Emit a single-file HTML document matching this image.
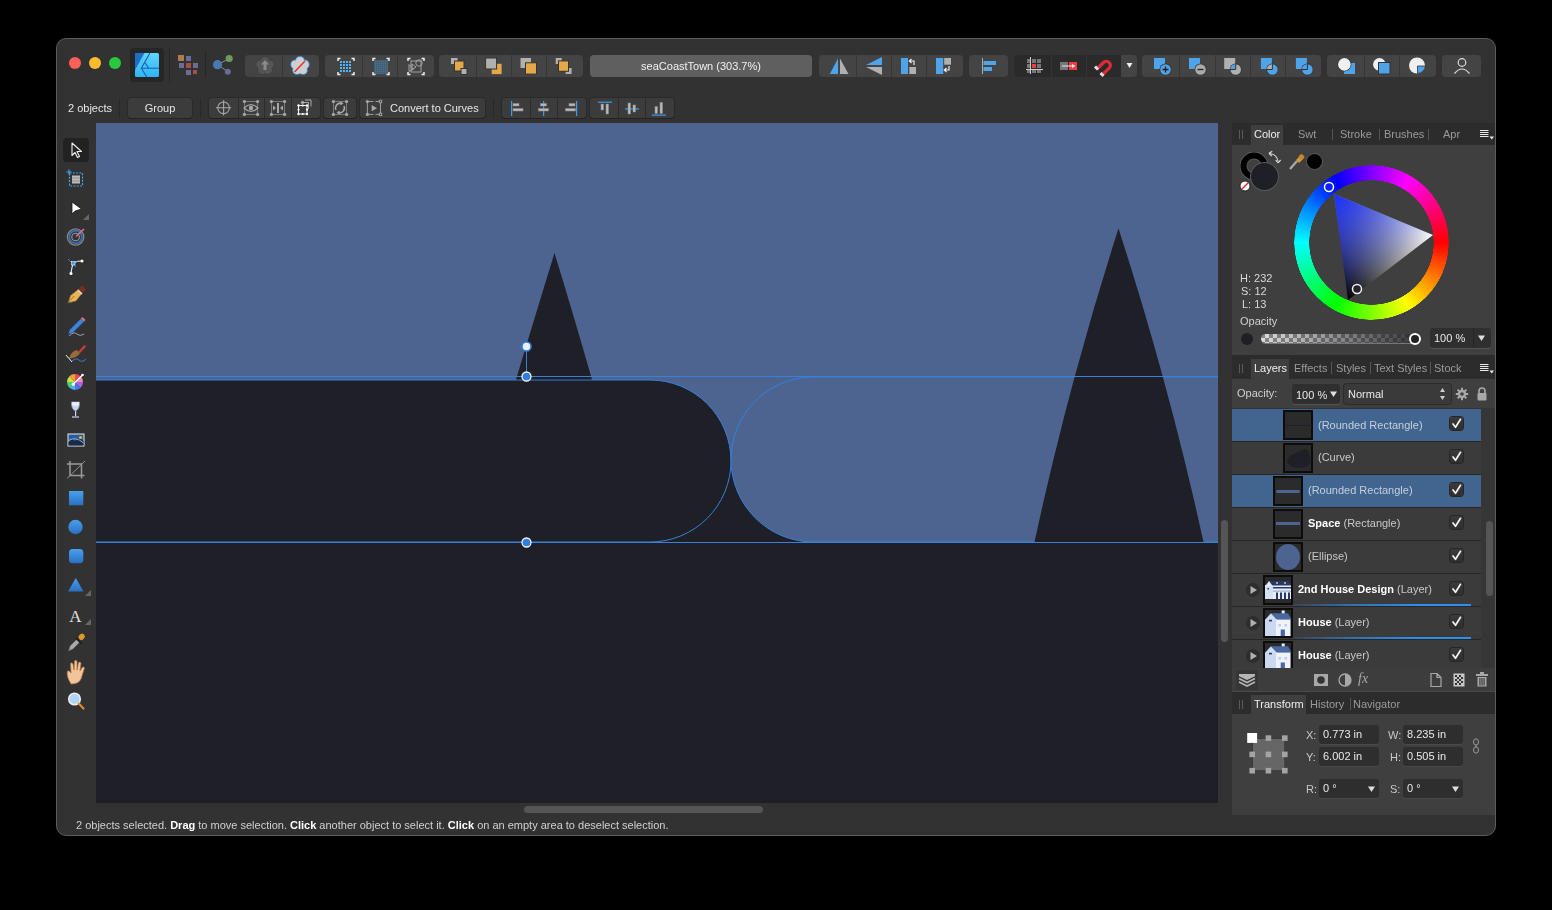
<!DOCTYPE html>
<html><head><meta charset="utf-8">
<style>
*{box-sizing:border-box;margin:0;padding:0}
html,body{width:1552px;height:910px;background:#000;overflow:hidden;font-family:"Liberation Sans",sans-serif;}
.a{position:absolute}
#win{position:absolute;left:56px;top:38px;width:1440px;height:798px;background:#323232;border-radius:10px;border:1px solid #5c5c5c;overflow:hidden}
.tb{position:absolute;background:#444;border-radius:4px;height:22px;top:55px;overflow:hidden}
.tb i{position:absolute;top:0;width:1px;height:22px;background:#363636}
.tb2{position:absolute;background:#3c3c3c;border-radius:3px;height:20px;top:98px;box-shadow:0 1px 0 #232323, 0 0 0 1px #2a2a2a;overflow:hidden}
.tb2 i{position:absolute;top:0;width:1px;height:20px;background:#2c2c2c}
.sep{position:absolute;width:1px;background:#262626}
.ic{position:absolute}
.txt{position:absolute;white-space:nowrap;will-change:transform;color:#e6e6e6;font-size:11px;line-height:13px}
#panel{position:absolute;left:1232px;top:123px;width:263px;height:692px;background:#3f3f3f}
.tabbar{position:absolute;left:1232px;width:263px;height:22px;background:#2c2c2c}
.tab{position:absolute;will-change:transform;top:4px;font-size:11px;color:#9a9a9a;line-height:13px;white-space:nowrap}
.tab.on{color:#eee}
.row{position:absolute;left:1232px;width:249px;height:32px;background:#3b3b3b}
.row.sel{background:#41658f}
.rsep{position:absolute;left:1232px;width:249px;height:1px;background:#262626}
.thumb{position:absolute;width:30px;height:30px;background:#2b2b2b;border:2px solid #0c0c0c}
.chk{position:absolute;left:1450px;width:13px;height:13px;border-radius:3px;background:linear-gradient(#3a3a3a,#2e2e2e);box-shadow:0 0 0 1px #262626}
.rtxt{position:absolute;will-change:transform;font-size:11px;color:#c8c8c8;white-space:nowrap;line-height:13px}
.rtxt b{color:#fff}
.fld{position:absolute;will-change:transform;background:#2e2e2e;box-shadow:0 1px 0 #4a4a4a;border-radius:3px;height:19px;font-size:11px;color:#e8e8e8;padding-left:4px;line-height:19px;white-space:nowrap}
</style></head><body>
<div id="win"></div>
<!-- traffic lights -->
<div class="a" style="left:69px;top:57px;width:12px;height:12px;border-radius:50%;background:#fe5f57"></div>
<div class="a" style="left:89px;top:57px;width:12px;height:12px;border-radius:50%;background:#febc2e"></div>
<div class="a" style="left:109px;top:57px;width:12px;height:12px;border-radius:50%;background:#28c840"></div>

<!-- top toolbar groups -->
<div class="a" style="left:130px;top:48px;width:34px;height:34px;background:#262626;border-radius:4px"></div>
<div class="sep" style="left:169px;top:48px;height:34px"></div>
<div class="sep" style="left:205px;top:51px;height:27px"></div>
<div class="tb" style="left:245px;width:74px"><i style="left:37px"></i></div>
<div class="tb" style="left:325px;width:109px"><i style="left:37px"></i><i style="left:72px"></i></div>
<div class="tb" style="left:439px;width:144px"><i style="left:37px"></i><i style="left:72px"></i><i style="left:107px"></i></div>
<div class="tb" style="left:590px;width:222px;background:#5f5f5f"></div>
<div class="txt" style="left:590px;top:60px;width:222px;text-align:center;color:#f0f0f0">seaCoastTown (303.7%)</div>
<div class="tb" style="left:819px;width:144px"><i style="left:37px"></i><i style="left:72px"></i><i style="left:107px"></i></div>
<div class="tb" style="left:969px;width:39px"></div>
<div class="tb" style="left:1014px;width:123px;background:#444"><div class="a" style="left:0;top:0;width:107px;height:22px;background:#2a2a2a"></div><i style="left:37px;background:#353535"></i><i style="left:72px;background:#353535"></i></div>
<div class="tb" style="left:1142px;width:179px"><i style="left:37px"></i><i style="left:73px"></i><i style="left:108px"></i><i style="left:143px"></i></div>
<div class="tb" style="left:1327px;width:109px"><i style="left:37px"></i><i style="left:72px"></i></div>
<div class="tb" style="left:1442px;width:39px"></div>

<svg class="a" style="left:0;top:0" width="1552" height="130" viewBox="0 0 1552 130"><defs><linearGradient id="lg" x1="0" y1="0" x2="0" y2="1"><stop offset="0" stop-color="#5fd4ff"/><stop offset="1" stop-color="#2fb4f4"/></linearGradient></defs>
<g transform="translate(135,53)"><rect x="0" y="0" width="24" height="24" rx="1.5" fill="url(#lg)"/><path d="M0 0 H9.5 L0 17z" fill="#1f6fc6"/>
<path d="M14.9 0 L6.4 15.3 H24 M6.4 15.3 L11.7 24 M9.8 9.5 L13.8 15.3" fill="none" stroke="#1a5fb0" stroke-width="1.1"/></g><g><rect x="178" y="55" width="6" height="6" fill="#b07a4f"/><rect x="186" y="56" width="5" height="5" fill="#6a6d96"/>
<rect x="179" y="63" width="5" height="5" fill="#6a6d96"/><rect x="186" y="63" width="5" height="5" fill="#a84e48"/><rect x="193" y="63" width="5" height="5" fill="#6a6d96"/>
<rect x="186" y="70" width="5" height="5" fill="#6a6d96"/><rect x="193" y="70" width="4" height="4" fill="#a84e48"/></g><g><path d="M217.5 64.7 L229.2 58.5 M217.5 64.7 L227.8 71.7" stroke="#8a8a8a" stroke-width="1"/><circle cx="217.5" cy="64.7" r="4.6" fill="#4a78b0"/><circle cx="229.2" cy="58.5" r="3.6" fill="#6f9a5a"/><circle cx="227.8" cy="71.7" r="3" fill="#6a6d9a"/></g><g fill="#3a3a3a"><circle cx="265.00" cy="61.05" r="4.65"/><circle cx="269.71" cy="64.47" r="4.65"/><circle cx="267.91" cy="70.00" r="4.65"/><circle cx="262.09" cy="70.00" r="4.65"/><circle cx="260.29" cy="64.47" r="4.65"/><circle cx="265" cy="66" r="6.00"/></g><g fill="#555"><circle cx="265.00" cy="61.05" r="4.05"/><circle cx="269.71" cy="64.47" r="4.05"/><circle cx="267.91" cy="70.00" r="4.05"/><circle cx="262.09" cy="70.00" r="4.05"/><circle cx="260.29" cy="64.47" r="4.05"/><circle cx="265" cy="66" r="5.40"/></g><path d="M265 60 L269 64.5 H266.5 V70 H263.5 V64.5 H261z" fill="#8a8a8a"/><g fill="#3b8fe0"><circle cx="300.00" cy="61.05" r="4.95"/><circle cx="304.71" cy="64.47" r="4.95"/><circle cx="302.91" cy="70.00" r="4.95"/><circle cx="297.09" cy="70.00" r="4.95"/><circle cx="295.29" cy="64.47" r="4.95"/><circle cx="300" cy="66" r="6.30"/></g><g fill="#cfcfcf"><circle cx="300.00" cy="61.05" r="4.05"/><circle cx="304.71" cy="64.47" r="4.05"/><circle cx="302.91" cy="70.00" r="4.05"/><circle cx="297.09" cy="70.00" r="4.05"/><circle cx="295.29" cy="64.47" r="4.05"/><circle cx="300" cy="66" r="5.40"/></g><line x1="294.5" y1="72" x2="305" y2="61" stroke="#e82a2a" stroke-width="1.4"/><g fill="none" stroke="#eee" stroke-width="1.5"><path d="M338 61.0 V58.5 H340.5 M351.5 58.5 H354 V61.0 M354 72.0 V74.5 H351.5 M340.5 74.5 H338 V72.0"/></g><g fill="#4fb5f5"><rect x="340" y="61" width="2" height="2"/><rect x="340" y="64" width="2" height="2"/><rect x="340" y="67" width="2" height="2"/><rect x="340" y="70" width="2" height="2"/><rect x="343" y="61" width="2" height="2"/><rect x="343" y="64" width="2" height="2"/><rect x="343" y="67" width="2" height="2"/><rect x="343" y="70" width="2" height="2"/><rect x="346" y="61" width="2" height="2"/><rect x="346" y="64" width="2" height="2"/><rect x="346" y="67" width="2" height="2"/><rect x="346" y="70" width="2" height="2"/><rect x="349" y="61" width="2" height="2"/><rect x="349" y="64" width="2" height="2"/><rect x="349" y="67" width="2" height="2"/><rect x="349" y="70" width="2" height="2"/></g><g fill="none" stroke="#eee" stroke-width="1.5"><path d="M373 61.0 V58.5 H375.5 M386.5 58.5 H389 V61.0 M389 72.0 V74.5 H386.5 M375.5 74.5 H373 V72.0"/></g><g fill="#4a9ee0"><rect x="374.5" y="60.5" width="1.2" height="1.2"/><rect x="374.5" y="62.5" width="1.2" height="1.2"/><rect x="374.5" y="64.5" width="1.2" height="1.2"/><rect x="374.5" y="66.5" width="1.2" height="1.2"/><rect x="374.5" y="68.5" width="1.2" height="1.2"/><rect x="374.5" y="70.5" width="1.2" height="1.2"/><rect x="374.5" y="72.5" width="1.2" height="1.2"/><rect x="376.5" y="60.5" width="1.2" height="1.2"/><rect x="376.5" y="62.5" width="1.2" height="1.2"/><rect x="376.5" y="64.5" width="1.2" height="1.2"/><rect x="376.5" y="66.5" width="1.2" height="1.2"/><rect x="376.5" y="68.5" width="1.2" height="1.2"/><rect x="376.5" y="70.5" width="1.2" height="1.2"/><rect x="376.5" y="72.5" width="1.2" height="1.2"/><rect x="378.5" y="60.5" width="1.2" height="1.2"/><rect x="378.5" y="62.5" width="1.2" height="1.2"/><rect x="378.5" y="64.5" width="1.2" height="1.2"/><rect x="378.5" y="66.5" width="1.2" height="1.2"/><rect x="378.5" y="68.5" width="1.2" height="1.2"/><rect x="378.5" y="70.5" width="1.2" height="1.2"/><rect x="378.5" y="72.5" width="1.2" height="1.2"/><rect x="380.5" y="60.5" width="1.2" height="1.2"/><rect x="380.5" y="62.5" width="1.2" height="1.2"/><rect x="380.5" y="64.5" width="1.2" height="1.2"/><rect x="380.5" y="66.5" width="1.2" height="1.2"/><rect x="380.5" y="68.5" width="1.2" height="1.2"/><rect x="380.5" y="70.5" width="1.2" height="1.2"/><rect x="380.5" y="72.5" width="1.2" height="1.2"/><rect x="382.5" y="60.5" width="1.2" height="1.2"/><rect x="382.5" y="62.5" width="1.2" height="1.2"/><rect x="382.5" y="64.5" width="1.2" height="1.2"/><rect x="382.5" y="66.5" width="1.2" height="1.2"/><rect x="382.5" y="68.5" width="1.2" height="1.2"/><rect x="382.5" y="70.5" width="1.2" height="1.2"/><rect x="382.5" y="72.5" width="1.2" height="1.2"/><rect x="384.5" y="60.5" width="1.2" height="1.2"/><rect x="384.5" y="62.5" width="1.2" height="1.2"/><rect x="384.5" y="64.5" width="1.2" height="1.2"/><rect x="384.5" y="66.5" width="1.2" height="1.2"/><rect x="384.5" y="68.5" width="1.2" height="1.2"/><rect x="384.5" y="70.5" width="1.2" height="1.2"/><rect x="384.5" y="72.5" width="1.2" height="1.2"/><rect x="386.5" y="60.5" width="1.2" height="1.2"/><rect x="386.5" y="62.5" width="1.2" height="1.2"/><rect x="386.5" y="64.5" width="1.2" height="1.2"/><rect x="386.5" y="66.5" width="1.2" height="1.2"/><rect x="386.5" y="68.5" width="1.2" height="1.2"/><rect x="386.5" y="70.5" width="1.2" height="1.2"/><rect x="386.5" y="72.5" width="1.2" height="1.2"/></g><g fill="none" stroke="#eee" stroke-width="1.5"><path d="M408 61.0 V58.5 H410.5 M421.5 58.5 H424 V61.0 M424 72.0 V74.5 H421.5 M410.5 74.5 H408 V72.0"/></g><g fill="none" stroke="#aaa" stroke-width="0.9"><rect x="411" y="61" width="10" height="11"/><circle cx="419" cy="63" r="3.2"/><path d="M409 64.5 L409 71.5 L413.5 69 z"/><path d="M412 64 L416 67 L412 70z"/></g><rect x="451" y="58" width="6.5" height="6" fill="#b0b0b0"/><rect x="454.5" y="61" width="9.5" height="10" fill="#e4a847" stroke="#333" stroke-width="1"/><rect x="461" y="68.5" width="6" height="6" fill="#b0b0b0" stroke="#333" stroke-width="1"/><rect x="491.7" y="63.8" width="9.9" height="10.3" fill="#e4a847"/><rect x="485.6" y="58" width="11" height="11" fill="#b0b0b0" stroke="#333" stroke-width="1"/><rect x="520.5" y="58" width="10.5" height="10" fill="#b0b0b0"/><rect x="525.5" y="62.8" width="11" height="11.3" fill="#e4a847" stroke="#333" stroke-width="1"/><rect x="555.7" y="58" width="6" height="6" fill="#b0b0b0"/><rect x="565.6" y="68" width="6" height="6" fill="#b0b0b0"/><rect x="558.5" y="60.9" width="10" height="10.4" fill="#e4a847" stroke="#333" stroke-width="1"/><path d="M829.8 74 L838 74 L838 58.5z" fill="#4fa3e8"/><path d="M840 58.5 L840 74 L848.5 74z" fill="#b0b0b0"/><path d="M866 65 L882 57 L882 65z" fill="#4fa3e8"/><path d="M866 67 L882 67 L882 75z" fill="#b0b0b0"/><rect x="901" y="58" width="7" height="16" fill="#4fa3e8"/><rect x="909.3" y="67" width="6.7" height="7" fill="#b0b0b0"/><path d="M914 65 V61 H909.5 M911.5 59 L909.3 61 L911.5 63" fill="none" stroke="#eee" stroke-width="1.2"/><rect x="936" y="58" width="7.2" height="16" fill="#4fa3e8"/><rect x="944.2" y="58" width="6.8" height="6.7" fill="#b0b0b0"/><path d="M949 66 V70 H944.5 M946.5 68 L944.3 70 L946.5 72" fill="none" stroke="#eee" stroke-width="1.2"/><rect x="982" y="58" width="1" height="16" fill="#aaa"/><rect x="983.5" y="61" width="12.5" height="4" fill="#4fa3e8"/><rect x="983.5" y="67" width="8.5" height="4" fill="#4fa3e8"/><g fill="#6a6a6a"><rect x="1027" y="59" width="4" height="4" fill="#777"/><rect x="1027" y="64" width="4" height="4" fill="#777"/><rect x="1027" y="69" width="4" height="4" fill="#777"/><rect x="1032" y="59" width="4" height="4" fill="#777"/><rect x="1032" y="64" width="4" height="4" fill="#777"/><rect x="1032" y="69" width="4" height="4" fill="#777"/><rect x="1037" y="59" width="4" height="4" fill="#777"/><rect x="1037" y="64" width="4" height="4" fill="#777"/><rect x="1037" y="69" width="4" height="4" fill="#777"/></g><rect x="1032" y="64" width="4" height="4" fill="#e84040"/><rect x="1030" y="57" width="1" height="17" fill="#ccc"/><rect x="1026" y="69" width="17" height="1" fill="#ccc"/><rect x="1060" y="62" width="8" height="8" fill="#777"/><rect x="1069" y="62" width="8" height="8" fill="#e84040"/><path d="M1062 66 H1074" stroke="#eee" stroke-width="1"/><path d="M1072 64 L1075.5 66 L1072 68z" fill="#eee"/><path d="M1096.5 72.5 L1103.5 65.5 A4 4 0 0 1 1109.2 71.2 L1102 78" fill="none" stroke="#e02b36" stroke-width="3.2" transform="translate(0,-3) rotate(0)"/><path d="M1094.5 70 L1097.5 73 M1100 76.5 L1103 79.5" stroke="#ddd" stroke-width="3" transform="translate(0.5,-3.5)"/><path d="M1126.5 63 H1132.5 L1129.5 68z" fill="#eee"/><rect x="1154" y="58" width="11" height="11" fill="#4fa3e8"/><circle cx="1165.5" cy="69.5" r="6" fill="#333"/><circle cx="1165.5" cy="69.5" r="5.3" fill="#4fa3e8"/><path d="M1162.5 69.5 H1168.5 M1165.5 66.5 V72.5" stroke="#222" stroke-width="1.3"/><rect x="1189.0" y="58" width="11" height="11" fill="#4fa3e8"/><circle cx="1200.5" cy="69.5" r="6" fill="#333"/><circle cx="1200.5" cy="69.5" r="5.3" fill="#aaa"/><path d="M1197.5 69.5 H1203.5" stroke="#222" stroke-width="1.3"/><rect x="1224.2" y="58" width="11" height="11" fill="#b0b0b0"/><circle cx="1235.7" cy="69.5" r="6" fill="#333"/><circle cx="1235.7" cy="69.5" r="5.3" fill="#b0b0b0"/><path d="M1230.4 69.5 A5.3 5.3 0 0 1 1235.7 64.2 V69 H1230.4z" fill="#4fa3e8"/><path d="M1229.7 69.5 H1235.7 V63.5" fill="none" stroke="#333" stroke-width="1"/><rect x="1260.9" y="58" width="11" height="11" fill="#4fa3e8"/><circle cx="1272.4" cy="69.5" r="6" fill="#333"/><circle cx="1272.4" cy="69.5" r="5.3" fill="#4fa3e8"/><path d="M1267.1000000000001 69.5 A5.3 5.3 0 0 1 1272.4 64.2 V69 H1267.1000000000001z" fill="#b0b0b0"/><path d="M1266.4 69.5 H1272.4 V63.5" fill="none" stroke="#333" stroke-width="1"/><rect x="1295.9" y="58" width="11" height="11" fill="#4fa3e8"/><circle cx="1307.4" cy="69.5" r="6" fill="#333"/><circle cx="1307.4" cy="69.5" r="5.3" fill="#4fa3e8"/><path d="M1302.1000000000001 69.5 A5.3 5.3 0 0 1 1307.4 64.2 V69 H1302.1000000000001z" fill="#4fa3e8"/><path d="M1301.4 69.5 H1307.4 V63.5" fill="none" stroke="#333" stroke-width="1"/><rect x="1344" y="63" width="11" height="11" fill="#4fa3e8"/><circle cx="1344.4" cy="64.4" r="7" fill="#333"/><circle cx="1344.4" cy="64.4" r="6.3" fill="#f0f0f0"/><circle cx="1379.4" cy="64.4" r="6.3" fill="#f0f0f0"/><rect x="1378.5" y="62.5" width="11.5" height="11.5" fill="#4fa3e8" stroke="#333" stroke-width="1"/><circle cx="1417" cy="65.5" r="8" fill="#f0f0f0"/><path d="M1417.5 66 H1425.4 A8 8 0 0 1 1417.5 73.4z" fill="#4fa3e8" stroke="#333" stroke-width="0.8"/><g fill="none" stroke="#ddd" stroke-width="1.2"><circle cx="1462" cy="62.5" r="3.8"/><path d="M1454.5 73.5 Q1462 64.5 1469.5 73.5"/></g></svg>
<!-- second toolbar row -->
<div class="txt" style="left:68px;top:102px;color:#e6e6e6">2 objects</div>
<div class="sep" style="left:119px;top:99px;height:19px;background:#282828"></div>
<div class="tb2" style="left:128px;width:64px"></div>
<div class="txt" style="left:128px;top:102px;width:64px;text-align:center">Group</div>
<div class="sep" style="left:200px;top:99px;height:19px;background:#282828"></div>
<div class="tb2" style="left:209px;width:111px"><i style="left:29px"></i><i style="left:55px"></i><i style="left:82px"></i></div>
<div class="tb2" style="left:324px;width:32px"></div>
<div class="tb2" style="left:360px;width:125px"></div>
<div class="txt" style="left:390px;top:102px">Convert to Curves</div>
<div class="sep" style="left:493px;top:99px;height:19px;background:#282828"></div>
<div class="tb2" style="left:502px;width:84px"><i style="left:28px"></i><i style="left:55px"></i></div>
<div class="tb2" style="left:590px;width:84px"><i style="left:28px"></i><i style="left:55px"></i></div>

<!-- left tools -->
<div class="a" style="left:63px;top:138px;width:26px;height:24px;background:#222;border-radius:4px"></div>

<svg class="a" style="left:0;top:90px" width="700" height="40" viewBox="0 90 700 40"><g fill="none" stroke="#a8a8a8" stroke-width="1.1"><circle cx="223.6" cy="107.8" r="5.8"/><path d="M216 107.8 H231.2 M223.6 100.2 V115.4"/></g><g fill="none" stroke="#a8a8a8" stroke-width="0.7" opacity="0.8"><rect x="244.4" y="101.5" width="13.200000000000017" height="12.900000000000006"/></g><g fill="#a8a8a8"><circle cx="244.4" cy="101.5" r="1.6"/><circle cx="257.6" cy="101.5" r="1.6"/><circle cx="244.4" cy="114.4" r="1.6"/><circle cx="257.6" cy="114.4" r="1.6"/></g><path d="M244 108 Q251 101 258 108 Q251 115 244 108z" fill="#3c3c3c" stroke="#a8a8a8" stroke-width="1.2"/><circle cx="251" cy="108" r="2.2" fill="#a8a8a8"/><g fill="none" stroke="#a8a8a8" stroke-width="0.7" opacity="0.8"><rect x="271.4" y="101.5" width="13.200000000000045" height="12.900000000000006"/></g><g fill="#a8a8a8"><circle cx="271.4" cy="101.5" r="1.6"/><circle cx="284.6" cy="101.5" r="1.6"/><circle cx="271.4" cy="114.4" r="1.6"/><circle cx="284.6" cy="114.4" r="1.6"/></g><rect x="277" y="103" width="2" height="10" fill="#a8a8a8"/><path d="M273 105.5 L276 108 L273 110.5z M283 105.5 L280 108 L283 110.5z" fill="#a8a8a8"/><g fill="none" stroke="#f0f0f0" stroke-width="1"><rect x="298.5" y="105.5" width="8.5" height="8.5"/></g><g fill="#fff"><circle cx="298.5" cy="105.5" r="1.2"/><circle cx="307" cy="105.5" r="1.2"/><circle cx="298.5" cy="114" r="1.2"/><circle cx="307" cy="114" r="1.2"/><circle cx="302.7" cy="114" r="1.1"/><circle cx="298.5" cy="109.7" r="1.1"/><circle cx="307" cy="109.7" r="1.1"/><circle cx="302.7" cy="105.5" r="1.1"/></g><path d="M302 103 V102.5 H308.5 V109 M305 100 H311 V106.5" fill="none" stroke="#a8a8a8" stroke-width="1"/><circle cx="302.5" cy="102.5" r="1.2" fill="none" stroke="#ddd" stroke-width="0.8"/><g fill="none" stroke="#a8a8a8" stroke-width="0.7" opacity="0.8"><rect x="333.4" y="101.5" width="13.200000000000045" height="12.900000000000006"/></g><g fill="#a8a8a8"><circle cx="333.4" cy="101.5" r="1.6"/><circle cx="346.6" cy="101.5" r="1.6"/><circle cx="333.4" cy="114.4" r="1.6"/><circle cx="346.6" cy="114.4" r="1.6"/></g><g fill="none" stroke="#a8a8a8" stroke-width="1.5"><path d="M336 110 A4.8 4.8 0 0 1 341.5 103.3"/><path d="M344 106 A4.8 4.8 0 0 1 338.5 112.7"/></g><path d="M340.5 101.3 L343.5 103.6 L340.3 105.5z M339.5 110.5 L336.5 112.4 L339.7 114.7z" fill="#a8a8a8"/><g stroke="#a8a8a8" stroke-width="0.9" fill="none"><path d="M367.4 101.5 V114.4 M380.5 103 V113 M369 101.5 H373.5 M375.5 101.5 H379 M369 114.4 H373.5 M375.5 114.4 H379"/><rect x="379.3" y="100.3" width="2.4" height="2.4"/><rect x="379.3" y="113.2" width="2.4" height="2.4"/></g><g fill="#a8a8a8"><circle cx="367.4" cy="101.5" r="1.6"/><circle cx="367.4" cy="114.4" r="1.6"/><path d="M371.7 105 L377 108.2 L371.7 111.3z"/></g><rect x="511" y="101" width="1.2" height="15" fill="#3d9be9"/><rect x="513" y="103.5" width="6" height="2.5" fill="#b8b8b8" stroke="#8a8a8a" stroke-width="0.5"/><rect x="513" y="108.5" width="10" height="2.5" fill="#b8b8b8" stroke="#8a8a8a" stroke-width="0.5"/><rect x="543" y="101" width="1.2" height="15" fill="#3d9be9"/><rect x="540.5" y="103.5" width="6" height="2.5" fill="#b8b8b8" stroke="#8a8a8a" stroke-width="0.5"/><rect x="538.5" y="108.5" width="10" height="2.5" fill="#b8b8b8" stroke="#8a8a8a" stroke-width="0.5"/><rect x="576" y="101" width="1.2" height="15" fill="#3d9be9"/><rect x="569" y="103.5" width="6" height="2.5" fill="#b8b8b8" stroke="#8a8a8a" stroke-width="0.5"/><rect x="565.5" y="108.5" width="10" height="2.5" fill="#b8b8b8" stroke="#8a8a8a" stroke-width="0.5"/><rect x="598" y="101.6" width="14" height="1.2" fill="#3d9be9"/><rect x="601" y="104" width="2.5" height="6" fill="#b8b8b8" stroke="#8a8a8a" stroke-width="0.5"/><rect x="606" y="104" width="2.5" height="10" fill="#b8b8b8" stroke="#8a8a8a" stroke-width="0.5"/><rect x="625" y="108.3" width="14" height="1.2" fill="#3d9be9"/><rect x="628" y="103" width="2.5" height="11" fill="#b8b8b8" stroke="#8a8a8a" stroke-width="0.5"/><rect x="633" y="105" width="2.5" height="7" fill="#b8b8b8" stroke="#8a8a8a" stroke-width="0.5"/><rect x="652" y="114.5" width="14" height="1.2" fill="#3d9be9"/><rect x="655" y="106.5" width="2.5" height="7" fill="#b8b8b8" stroke="#8a8a8a" stroke-width="0.5"/><rect x="660" y="102.5" width="2.5" height="11" fill="#b8b8b8" stroke="#8a8a8a" stroke-width="0.5"/></svg>
<svg class="a" style="left:56px;top:130px" width="40" height="600" viewBox="56 130 40 600"><path d="M72 143 L72 155.5 L75 152.5 L77.5 157.5 L79.5 156.5 L77 151.5 L81.5 151.5z" fill="#222" stroke="#eee" stroke-width="1.1" stroke-linejoin="round"/><rect x="69.5" y="173" width="13" height="13" fill="none" stroke="#3ea4f0" stroke-width="1.2" stroke-dasharray="2 1.3"/><rect x="72" y="175.5" width="8" height="8" fill="#bbb"/><path d="M72 178 H80 M72 181 H80" stroke="#888" stroke-width="0.8"/><path d="M66.5 172 H71.5 M69 169.5 V174.5" stroke="#3ea4f0" stroke-width="1.2"/><path d="M72 202 L72 214 L75.2 211 L81.5 209z" fill="#fff" stroke="#111" stroke-width="0.8" stroke-linejoin="round"/><path d="M89 214 V220 H83z" fill="#666"/><circle cx="75.6" cy="237" r="8.2" fill="none" stroke="#888" stroke-width="1.3"/><circle cx="75.6" cy="237" r="6.3" fill="none" stroke="#3a6fc0" stroke-width="1.8"/><circle cx="75.6" cy="237" r="3.8" fill="#333" stroke="#999" stroke-width="1.1"/><path d="M76 236.5 L84 229" stroke="#e8709a" stroke-width="1.4"/><path d="M68 259 L76 267 M73 263 Q73 269 70 273" fill="none" stroke="#3a7ed0" stroke-width="1"/><path d="M73.5 263 Q77 260.5 83 261 M73.5 263 Q71.5 266 71 274" fill="none" stroke="#eee" stroke-width="1"/><rect x="71.5" y="261.5" width="3.5" height="3.5" fill="#3a9ef0" stroke="#eee" stroke-width="0.6"/><circle cx="82" cy="261" r="1.5" fill="#fff"/><circle cx="71" cy="273.5" r="1.5" fill="#fff"/><path d="M68 303 L70.5 295.5 L78 289.5 L82 293.5 L76 301z" fill="#e9b458" stroke="#8a5a20" stroke-width="0.7"/><path d="M78.5 289 L82 285.5 L86 289.5 L82.5 293z" fill="#7a2e22"/><path d="M78 290 L82 294" stroke="#ddd" stroke-width="1.2"/><path d="M68 303 L74 296" stroke="#6a4a20" stroke-width="0.6"/><path d="M69.5 330 L81 318.5 L84 321.5 L72.5 333 L68.5 334z" fill="#3f86d8" stroke="#1e4e90" stroke-width="0.6"/><path d="M81 318.5 L82.5 317 L85.5 320 L84 321.5z" fill="#e8707a"/><path d="M69 336 Q74 331 77 334 Q80 337 84 334" fill="none" stroke="#bbb" stroke-width="0.8"/><path d="M69 358.5 Q71 351 77 350 L80 353 Q77 358 69 358.5z" fill="#9a6a3a"/><path d="M78.5 351.5 L84.5 345 L86 346.5 L80 353z" fill="#d83a3a"/><path d="M66 355 L72 362 M71 362 Q76 357 79 360 Q82 363 86 359" fill="none" stroke="#3a7ed0" stroke-width="1"/><path d="M66 355 L72 362" stroke="#ddd" stroke-width="1"/><path d="M75 382 L75.00 374.00 A8 8 0 0 1 80.77 376.46z" fill="#e84a5a"/><path d="M75 382 L80.66 376.34 A8 8 0 0 1 83.00 382.16z" fill="#f08ab0"/><path d="M75 382 L83.00 382.00 A8 8 0 0 1 80.54 387.77z" fill="#b060e0"/><path d="M75 382 L80.66 387.66 A8 8 0 0 1 74.84 390.00z" fill="#5070e8"/><path d="M75 382 L75.00 390.00 A8 8 0 0 1 69.23 387.54z" fill="#40b8e0"/><path d="M75 382 L69.34 387.66 A8 8 0 0 1 67.00 381.84z" fill="#50d070"/><path d="M75 382 L67.00 382.00 A8 8 0 0 1 69.46 376.23z" fill="#c8e040"/><path d="M75 382 L69.34 376.34 A8 8 0 0 1 75.16 374.00z" fill="#f0a030"/><path d="M73.5 384 L82.5 375" stroke="#fff" stroke-width="1.2"/><circle cx="73.3" cy="384.2" r="1.6" fill="#fff"/><circle cx="82.5" cy="375" r="1.3" fill="#fff"/><path d="M71.5 402 Q71 409 75.5 411 Q80 409 79.5 402z" fill="#c8d4ee" stroke="#8a9ac0" stroke-width="0.7"/><rect x="75" y="411" width="1.2" height="5" fill="#c8d4ee"/><path d="M72 417 H79" stroke="#c8d4ee" stroke-width="1.2"/><path d="M72 405 Q75.5 407 79 405 L79 402 H72z" fill="#fff" opacity="0.6"/><rect x="67.5" y="433.5" width="17" height="13" fill="#e8e8e8"/><rect x="68.5" y="434.5" width="15" height="11" fill="#2a5a9a"/><path d="M68.5 442 L72 439 L75 441 L79 438 L83.5 441 V445.5 H68.5z" fill="#1a2a44"/><path d="M68.5 440.5 Q76 436 83.5 443" fill="none" stroke="#8ab4e8" stroke-width="1"/><circle cx="80.5" cy="437.5" r="1.6" fill="#f0b040"/><g stroke="#9a9a9a" stroke-width="1.5" fill="none"><path d="M70 461 V475.5 H84.5 M67 464 H81.5 V478.5"/><path d="M67 478.5 L85 461" stroke-width="0.9"/></g><defs><linearGradient id="tbl" x1="0" y1="0" x2="0" y2="1"><stop offset="0" stop-color="#4aa0f0"/><stop offset="1" stop-color="#2a6fc0"/></linearGradient></defs><rect x="69" y="491" width="14.3" height="14.3" fill="url(#tbl)"/><circle cx="75.5" cy="527" r="7.2" fill="url(#tbl)"/><rect x="69" y="549" width="14.3" height="14.3" rx="3.5" fill="url(#tbl)"/><path d="M75.8 578 L83.5 591.6 H68z" fill="url(#tbl)"/><path d="M91 590 V596 H85z" fill="#666"/><text x="75.5" y="621.5" font-family="Liberation Serif" font-size="17" fill="#e0e0e0" text-anchor="middle">A</text><path d="M91 619 V625 H85z" fill="#666"/><path d="M68.5 651 L70 646 L77 639 L80 642 L73 649z" fill="#aaa" stroke="#555" stroke-width="0.6"/><path d="M76 638 L82 644" stroke="#222" stroke-width="2"/><rect x="79" y="633.5" width="5.5" height="6.5" rx="2.5" fill="#e0962a" transform="rotate(45 81.7 636.7)"/><path d="M71 684 Q66 676 67.5 671 Q69 670 71 673 L70.5 663.5 Q72 662 73 664 L74 670 L74.5 661 Q76 659.5 77 661.5 L77 670 L78.5 662.5 Q80 661.5 81 663 L80 671 L82.5 667 Q84 666.5 84.5 668 L81 679 Q79 684 71 684z" fill="#f2c49a" stroke="#a87048" stroke-width="0.7"/><circle cx="74.5" cy="699" r="5.8" fill="#aed4f8" stroke="#eee" stroke-width="1.5"/><path d="M78.8 703.5 L83.5 708.5" stroke="#e08a2a" stroke-width="2.2" stroke-linecap="round"/></svg>
<!-- canvas -->
<svg class="a" style="left:96px;top:123px" width="1122" height="680" viewBox="96 123 1122 680">
  <rect x="96" y="123" width="1122" height="680" fill="#1e1f27"/>
  <rect x="96" y="123" width="1122" height="419" fill="#4d6390"/>
  <rect x="650" y="461" width="165" height="81" fill="#1e1f27"/>
  <path d="M80 380 H650 A81 81 0 0 1 650 542 H80 Z" fill="#1e1f27" stroke="#3482de" stroke-width="1"/>
  <path d="M1300 377 H813.5 A82.5 82.5 0 0 0 813.5 542 H1300 Z" fill="#4d6390" stroke="#3482de" stroke-width="1"/>
  <path d="M516 379.5 Q537 310 554.5 253 Q572 310 592 379.5 Z" fill="#1e1f27"/>
  <path d="M1034.5 542 Q1068.8 383.2 1118.5 228.5 Q1168.7 383.2 1203.5 542 Z" fill="#1e1f27"/>
  <line x1="96" y1="376.5" x2="1218" y2="376.5" stroke="#3a80d8" stroke-width="1.2"/>
  <line x1="96" y1="542.5" x2="1218" y2="542.5" stroke="#3a80d8" stroke-width="1.2"/>
  <line x1="526.5" y1="346" x2="526.5" y2="376" stroke="#3a80d8" stroke-width="1"/>
  <circle cx="526.5" cy="346.5" r="4.5" fill="#e8f0ff" stroke="#2f7fe0" stroke-width="1.5"/>
  <circle cx="526.5" cy="376.5" r="4.5" fill="#2f7fe0" stroke="#f4f4f4" stroke-width="1.3"/>
  <circle cx="526.5" cy="542.5" r="4.5" fill="#2f7fe0" stroke="#f4f4f4" stroke-width="1.3"/>
</svg>
<!-- scrollbars -->
<div class="a" style="left:1221px;top:520px;width:7px;height:122px;border-radius:4px;background:#555"></div>
<div class="a" style="left:524px;top:806px;width:239px;height:7px;border-radius:4px;background:#555"></div>

<!-- status -->
<div class="txt" style="left:76px;top:819px;color:#d0d0d0">2 objects selected. <b style="color:#fff">Drag</b> to move selection. <b style="color:#fff">Click</b> another object to select it. <b style="color:#fff">Click</b> on an empty area to deselect selection.</div>

<!-- panels -->
<div id="panel"></div>
<div class="tabbar" style="top:123px;height:22px"></div>
<div class="a" style="left:1251px;top:125px;width:32px;height:20px;background:#3f3f3f"></div>
<div class="tab on" style="left:1254px;top:128px">Color</div>
<div class="tab" style="left:1298px;top:128px">Swt</div>
<div class="tab" style="left:1340px;top:128px">Stroke</div>
<div class="tab" style="left:1384px;top:128px">Brushes</div>
<div class="tab" style="left:1443px;top:128px">Apr</div>


<!-- color panel content -->

<svg class="a" style="left:1480px;top:129px" width="16" height="12"><g fill="#e8e8e8"><rect x="0" y="1" width="8.5" height="1"/><rect x="0" y="3" width="8.5" height="1"/><rect x="0" y="5" width="8.5" height="1"/><rect x="0" y="7" width="8.5" height="1"/></g><path d="M9.5 7.5 h4.5 l-2.25 3z" fill="#e8e8e8"/></svg>
<!-- stroke/fill swatches -->
<svg class="a" style="left:1240px;top:152px" width="30" height="30"><circle cx="14" cy="14" r="10.5" fill="none" stroke="#5a5a5a" stroke-width="8"/><circle cx="14" cy="14" r="10.5" fill="none" stroke="#000" stroke-width="6"/></svg>
<div class="a" style="left:1251px;top:163px;width:27px;height:27px;border-radius:50%;background:#1e1f27;box-shadow:0 0 0 1px #5a5a5a"></div>
<svg class="a" style="left:1239px;top:180px" width="12" height="12"><circle cx="6" cy="6" r="5" fill="#fff" stroke="#222" stroke-width="1"/><line x1="2.8" y1="9.2" x2="9.2" y2="2.8" stroke="#e0202a" stroke-width="1.3"/></svg>
<svg class="a" style="left:1266px;top:150px" width="16" height="16" viewBox="0 0 16 16"><path d="M4 3.5 Q11 4.5 12 11.5" fill="none" stroke="#d8d8d8" stroke-width="1.2"/><path d="M3 3.3 L6.3 1.2 M3 3.3 L5.8 6" fill="none" stroke="#d8d8d8" stroke-width="1.2"/><path d="M12.2 12.8 L9.6 10.2 M12.2 12.8 L14.6 10" fill="none" stroke="#d8d8d8" stroke-width="1.2"/></svg>
<svg class="a" style="left:1288px;top:153px" width="18" height="18"><path d="M2 16 L9 8" stroke="#aaa" stroke-width="2.2"/><path d="M8 7 L12 3 L15 6 L11 10 Z" fill="#d8963a"/><rect x="11" y="1.5" width="5" height="5" rx="1.5" fill="#c8872e" transform="rotate(45 13.5 4)"/></svg>
<div class="a" style="left:1307px;top:154px;width:15px;height:15px;border-radius:50%;background:#000;box-shadow:0 0 0 1px #555"></div>
<!-- hue wheel -->
<div class="a" style="left:1294px;top:165px;width:155px;height:155px;border-radius:50%;background:conic-gradient(from 90deg,#f00,#ff0,#0f0,#0ff,#00f,#f0f,#f00);-webkit-mask:radial-gradient(circle,transparent 62px,#000 62.5px,#000 77px,transparent 77.5px);mask:radial-gradient(circle,transparent 62px,#000 62.5px,#000 77px,transparent 77.5px)"></div>
<svg class="a" style="left:1294px;top:165px" width="155" height="155" viewBox="1294 165 155 155">
 <defs>
  <linearGradient id="tg1" gradientUnits="userSpaceOnUse" x1="1348" y1="300" x2="1433" y2="235"><stop offset="0" stop-color="#000"/><stop offset="1" stop-color="#fff"/></linearGradient>
  <linearGradient id="tg2" gradientUnits="userSpaceOnUse" x1="1334" y1="194" x2="1390.5" y2="267.5"><stop offset="0" stop-color="#1a30ff" stop-opacity="1"/><stop offset="1" stop-color="#1a30ff" stop-opacity="0"/></linearGradient>
 </defs>
 <path d="M1334 194 L1433 235 L1348 300 Z" fill="url(#tg1)"/>
 <path d="M1334 194 L1433 235 L1348 300 Z" fill="url(#tg2)"/>
 <circle cx="1329" cy="187" r="4.5" fill="#0a22ff" stroke="#fff" stroke-width="1.5"/>
 <circle cx="1357" cy="289" r="4.5" fill="#22232b" stroke="#f2f2f2" stroke-width="1.5"/>
</svg>
<div class="txt" style="left:1240px;top:272px;color:#d8d8d8">H: 232</div>
<div class="txt" style="left:1241px;top:285px;color:#d8d8d8">S: 12</div>
<div class="txt" style="left:1242px;top:298px;color:#d8d8d8">L: 13</div>
<div class="txt" style="left:1240px;top:315px;color:#d0d0d0">Opacity</div>
<div class="a" style="left:1241px;top:333px;width:12px;height:12px;border-radius:50%;background:#1e1f27"></div>
<div class="a" style="left:1261px;top:334px;width:158px;height:9px;border-radius:5px;background:linear-gradient(90deg,rgba(42,42,48,0) 0%,rgba(36,36,42,.9) 100%),repeating-conic-gradient(#ddd 0 25%,#888 0 50%) 0 0/8px 8px;box-shadow:0 1px 0 #777"></div>
<div class="a" style="left:1409px;top:333px;width:12px;height:12px;border-radius:50%;background:#222;border:2px solid #fff"></div>
<div class="a" style="left:1430px;top:328px;width:61px;height:20px;border-radius:3px;background:#2f2f2f;box-shadow:0 1px 0 #555"></div>
<div class="a" style="left:1473px;top:328px;width:1px;height:20px;background:#262626"></div>
<div class="txt" style="left:1434px;top:332px;color:#e8e8e8">100 %</div>
<svg class="a" style="left:1478px;top:335px" width="8" height="7"><path d="M0 0.5h7l-3.5 5.5z" fill="#ddd"/></svg>
<div class="a" style="left:1232px;top:355px;width:263px;height:2px;background:#2a2a2a"></div>
<div class="tabbar" style="top:356px;height:23px"></div>
<div class="a" style="left:1251px;top:359px;width:38px;height:20px;background:#3f3f3f"></div>
<div class="tab on" style="left:1254px;top:362px">Layers</div>
<div class="tab" style="left:1294px;top:362px">Effects</div>
<div class="tab" style="left:1336px;top:362px">Styles</div>
<div class="tab" style="left:1374px;top:362px">Text Styles</div>
<div class="tab" style="left:1434px;top:362px">Stock</div>

<!-- layer list bg -->
<div class="a" style="left:1232px;top:408px;width:263px;height:260px;background:#333"></div>
<div class="a" style="left:1232px;top:668px;width:263px;height:23px;background:#3d3d3d"></div>


<!-- layers opacity row -->
<div class="txt" style="left:1237px;top:387px;color:#d0d0d0">Opacity:</div>
<div class="a" style="left:1292px;top:384px;width:48px;height:20px;border-radius:3px;background:#2f2f2f;box-shadow:0 1px 0 #555"></div>
<div class="txt" style="left:1296px;top:389px;color:#e8e8e8">100 %</div>
<svg class="a" style="left:1330px;top:391px" width="8" height="7"><path d="M0 0.5h7l-3.5 5.5z" fill="#ddd"/></svg>
<div class="a" style="left:1344px;top:384px;width:107px;height:20px;border-radius:3px;background:#3a3a3a;box-shadow:0 0 0 1px #2c2c2c,0 1px 0 #555"></div>
<div class="txt" style="left:1348px;top:388px;color:#e8e8e8">Normal</div>
<svg class="a" style="left:1439px;top:387px" width="8" height="14"><path d="M1 5h5l-2.5-4z M1 9h5l-2.5 4z" fill="#ccc"/></svg>
<svg class="a" style="left:1455px;top:387px" width="14" height="14" viewBox="0 0 14 14"><g fill="#a8a8a8"><circle cx="7" cy="7" r="4.2"/><rect x="6" y="0.8" width="2" height="12.4"/><rect x="0.8" y="6" width="12.4" height="2"/><rect x="6" y="0.8" width="2" height="12.4" transform="rotate(45 7 7)"/><rect x="6" y="0.8" width="2" height="12.4" transform="rotate(-45 7 7)"/></g><circle cx="7" cy="7" r="1.8" fill="#3f3f3f"/></svg>
<svg class="a" style="left:1476px;top:387px" width="12" height="14" viewBox="0 0 12 14"><path d="M3 6V4a3 3 0 0 1 6 0v2" fill="none" stroke="#a8a8a8" stroke-width="1.6"/><rect x="1.5" y="6" width="9" height="7.5" rx="1" fill="#a8a8a8"/></svg>

<div class="row sel" style="top:409px"></div>
<div class="rsep" style="top:441px"></div>
<div class="row" style="top:442px"></div>
<div class="rsep" style="top:474px"></div>
<div class="row sel" style="top:475px"></div>
<div class="rsep" style="top:507px"></div>
<div class="row" style="top:508px"></div>
<div class="rsep" style="top:540px"></div>
<div class="row" style="top:541px"></div>
<div class="rsep" style="top:573px"></div>
<div class="row" style="top:574px"></div>
<div class="rsep" style="top:606px"></div>
<div class="row" style="top:607px"></div>
<div class="rsep" style="top:639px"></div>
<div class="row" style="top:640px;height:28px"></div>
<!-- insertion lines -->
<div class="a" style="left:1292px;top:604px;width:179px;height:1.5px;background:linear-gradient(90deg,rgba(47,143,240,0.1),rgba(47,143,240,0.6) 30%,#2f8ff0 70%,#2f8ff0)"></div>
<div class="a" style="left:1292px;top:637px;width:179px;height:1.5px;background:linear-gradient(90deg,rgba(47,143,240,0.1),rgba(47,143,240,0.6) 30%,#2f8ff0 70%,#2f8ff0)"></div>
<!-- scrollbar -->
<div class="a" style="left:1481px;top:408px;width:14px;height:260px;background:#363636"></div>
<div class="a" style="left:1486px;top:521px;width:7px;height:75px;border-radius:4px;background:#555"></div>

<!-- thumbs -->
<div class="thumb" style="left:1283px;top:410px"><div class="a" style="left:1px;top:13px;width:26px;height:1px;background:#1e1f27"></div></div>
<div class="thumb" style="left:1283px;top:443px"><svg class="a" style="left:0;top:0" width="26" height="26"><path d="M2 17 C2 10 12 8 20 4 C26 6 27 16 24 20 C20 24 6 25 2 17Z" fill="#1e1f27"/></svg></div>
<div class="thumb" style="left:1273px;top:476px"><div class="a" style="left:1px;top:12px;width:24px;height:3px;border-radius:2px;background:#4d6390"></div></div>
<div class="thumb" style="left:1273px;top:509px"><div class="a" style="left:1px;top:11px;width:24px;height:3px;background:#4d6390"></div></div>
<div class="thumb" style="left:1273px;top:542px"><div class="a" style="left:1px;top:0px;width:24px;height:26px;border-radius:50%;background:#4d6390"></div></div>
<div class="thumb" style="left:1263px;top:575px;background:#2a2a2a"></div>
<div class="thumb" style="left:1263px;top:608px;background:#2a2a2a"></div>
<div class="thumb" style="left:1263px;top:641px;height:27px;border-bottom:none;background:#2a2a2a"></div>
<svg class="a" style="left:1258px;top:572px" width="40" height="96" viewBox="1258 572 40 96"><defs><clipPath id="thc"><rect x="1258" y="572" width="40" height="96"/></clipPath></defs><g clip-path="url(#thc)"><rect x="1265" y="585" width="26" height="14" fill="#e6ecf8"/><path d="M1268 585.5 L1270 581 H1289 L1291 585.5z" fill="#2a3866"/><path d="M1265 586.5 L1269 581 L1273 586.5z" fill="#e6ecf8"/><rect x="1265" y="586" width="8" height="13" fill="#d6e0f4"/><rect x="1273" y="587" width="18" height="1.5" fill="#2a3866"/><rect x="1273" y="590.5" width="18" height="1.2" fill="#9aaad0"/><g fill="#2a3866"><rect x="1276" y="592.5" width="2" height="6.5"/><rect x="1280" y="592.5" width="2" height="6.5"/><rect x="1284" y="592.5" width="2" height="6.5"/><rect x="1288" y="592.5" width="2" height="6.5"/><rect x="1267.5" y="588" width="1.5" height="1.5"/></g><circle cx="1277" cy="583" r="0.9" fill="#c8d4ee"/><circle cx="1285" cy="583" r="0.9" fill="#c8d4ee"/><rect x="1281.7" y="610.5" width="3" height="4.5" fill="#e6ecf8"/><path d="M1265 619.5 L1270.5 613.2 H1288 L1291.5 619.5 Z" fill="#4a68a0"/><path d="M1265 620 L1271 613.5 L1277 620 Z" fill="#d2ddf2"/><rect x="1265" y="619.5" width="11" height="16.5" fill="#cad8f0"/><rect x="1276" y="619.5" width="14.5" height="16.5" fill="#eef2fb"/><rect x="1269" y="619.8" width="3" height="1.6" fill="#2a3a66"/><rect x="1280.7" y="629.5" width="4.2" height="6.5" fill="#4a68a0"/><rect x="1278.5" y="624" width="2.5" height="2.5" fill="#c0cde6"/><rect x="1284.5" y="624" width="2.5" height="2.5" fill="#c0cde6"/><rect x="1281.7" y="643.5" width="3" height="4.5" fill="#e6ecf8"/><path d="M1265 652.5 L1270.5 646.2 H1288 L1291.5 652.5 Z" fill="#4a68a0"/><path d="M1265 653 L1271 646.5 L1277 653 Z" fill="#d2ddf2"/><rect x="1265" y="652.5" width="11" height="16.5" fill="#cad8f0"/><rect x="1276" y="652.5" width="14.5" height="16.5" fill="#eef2fb"/><rect x="1269" y="652.8" width="3" height="1.6" fill="#2a3a66"/><rect x="1280.7" y="662.5" width="4.2" height="6.5" fill="#4a68a0"/><rect x="1278.5" y="657" width="2.5" height="2.5" fill="#c0cde6"/><rect x="1284.5" y="657" width="2.5" height="2.5" fill="#c0cde6"/></g></svg>
<!-- expand arrows -->
<div class="a" style="left:1246px;top:583px;width:14px;height:14px;border-radius:50%;background:#2d2d2d"></div>
<svg class="a" style="left:1249px;top:585px" width="9" height="10"><path d="M1.5 1 L8 5 L1.5 9z" fill="#b0b0b0"/></svg>
<div class="a" style="left:1246px;top:616px;width:14px;height:14px;border-radius:50%;background:#2d2d2d"></div>
<svg class="a" style="left:1249px;top:618px" width="9" height="10"><path d="M1.5 1 L8 5 L1.5 9z" fill="#b0b0b0"/></svg>
<div class="a" style="left:1246px;top:649px;width:14px;height:14px;border-radius:50%;background:#2d2d2d"></div>
<svg class="a" style="left:1249px;top:651px" width="9" height="10"><path d="M1.5 1 L8 5 L1.5 9z" fill="#b0b0b0"/></svg>
<!-- row text -->
<div class="rtxt" style="left:1318px;top:419px;color:#c3cfdd">(Rounded Rectangle)</div>
<div class="rtxt" style="left:1318px;top:451px">(Curve)</div>
<div class="rtxt" style="left:1308px;top:484px;color:#c3cfdd">(Rounded Rectangle)</div>
<div class="rtxt" style="left:1308px;top:517px"><b>Space</b> (Rectangle)</div>
<div class="rtxt" style="left:1308px;top:550px">(Ellipse)</div>
<div class="rtxt" style="left:1298px;top:583px"><b>2nd House Design</b> (Layer)</div>
<div class="rtxt" style="left:1298px;top:616px"><b>House</b> (Layer)</div>
<div class="rtxt" style="left:1298px;top:649px"><b>House</b> (Layer)</div>
<!-- checkboxes -->
<div class="chk" style="top:417px"><svg width="13" height="13" style="position:absolute;left:0;top:0"><path d="M3 7 L5.5 10.3 L10.5 2.3" fill="none" stroke="#f2f2f2" stroke-width="1.7" stroke-linecap="round" stroke-linejoin="round"/></svg></div><div class="chk" style="top:450px"><svg width="13" height="13" style="position:absolute;left:0;top:0"><path d="M3 7 L5.5 10.3 L10.5 2.3" fill="none" stroke="#f2f2f2" stroke-width="1.7" stroke-linecap="round" stroke-linejoin="round"/></svg></div><div class="chk" style="top:483px"><svg width="13" height="13" style="position:absolute;left:0;top:0"><path d="M3 7 L5.5 10.3 L10.5 2.3" fill="none" stroke="#f2f2f2" stroke-width="1.7" stroke-linecap="round" stroke-linejoin="round"/></svg></div><div class="chk" style="top:516px"><svg width="13" height="13" style="position:absolute;left:0;top:0"><path d="M3 7 L5.5 10.3 L10.5 2.3" fill="none" stroke="#f2f2f2" stroke-width="1.7" stroke-linecap="round" stroke-linejoin="round"/></svg></div>
<div class="chk" style="top:549px"><svg width="13" height="13" style="position:absolute;left:0;top:0"><path d="M3 7 L5.5 10.3 L10.5 2.3" fill="none" stroke="#f2f2f2" stroke-width="1.7" stroke-linecap="round" stroke-linejoin="round"/></svg></div><div class="chk" style="top:582px"><svg width="13" height="13" style="position:absolute;left:0;top:0"><path d="M3 7 L5.5 10.3 L10.5 2.3" fill="none" stroke="#f2f2f2" stroke-width="1.7" stroke-linecap="round" stroke-linejoin="round"/></svg></div><div class="chk" style="top:615px"><svg width="13" height="13" style="position:absolute;left:0;top:0"><path d="M3 7 L5.5 10.3 L10.5 2.3" fill="none" stroke="#f2f2f2" stroke-width="1.7" stroke-linecap="round" stroke-linejoin="round"/></svg></div><div class="chk" style="top:648px"><svg width="13" height="13" style="position:absolute;left:0;top:0"><path d="M3 7 L5.5 10.3 L10.5 2.3" fill="none" stroke="#f2f2f2" stroke-width="1.7" stroke-linecap="round" stroke-linejoin="round"/></svg></div>

<!-- layers footer -->
<div class="a" style="left:1236px;top:670px;width:22px;height:20px;background:#363636"></div>
<svg class="a" style="left:1236px;top:670px" width="22" height="20" viewBox="0 0 22 20"><path d="M3 4 H19 V6.3 L11 10 L3 6.3z" fill="#b4b4b4"/><path d="M3 8.5 L11 12.5 L19 8.5 M3 12 L11 16 L19 12" fill="none" stroke="#b4b4b4" stroke-width="1.6"/></svg>
<svg class="a" style="left:1314px;top:673px" width="14" height="14"><rect x="0" y="1" width="14" height="12" fill="#a8a8a8"/><circle cx="7" cy="7" r="3.8" fill="#333"/></svg>
<svg class="a" style="left:1338px;top:673px" width="14" height="14"><circle cx="7" cy="7" r="6" fill="none" stroke="#a8a8a8" stroke-width="1.3"/><path d="M7 1 A6 6 0 0 1 7 13z" fill="#a8a8a8"/></svg>
<div class="a" style="left:1358px;top:671px;font-family:'Liberation Serif',serif;font-style:italic;font-size:14px;color:#a8a8a8;line-height:16px">fx</div>
<svg class="a" style="left:1430px;top:673px" width="12" height="14"><path d="M1 0.5 H7 L11 4.5 V13.5 H1z M7 0.5 V4.5 H11" fill="none" stroke="#a8a8a8" stroke-width="1.2"/></svg>
<svg class="a" style="left:1453px;top:673px" width="12" height="14"><rect x="0.5" y="0.5" width="11" height="13" fill="#c8c8c8"/><g fill="#333"><rect x="2" y="2" width="2" height="2"/><rect x="6" y="2" width="2" height="2"/><rect x="4" y="4" width="2" height="2"/><rect x="8" y="4" width="2" height="2"/><rect x="2" y="6" width="2" height="2"/><rect x="6" y="6" width="2" height="2"/><rect x="4" y="8" width="2" height="2"/><rect x="8" y="8" width="2" height="2"/><rect x="2" y="10" width="2" height="2"/><rect x="6" y="10" width="2" height="2"/></g></svg>
<svg class="a" style="left:1476px;top:672px" width="12" height="15"><rect x="0" y="2" width="12" height="2" fill="#a8a8a8"/><rect x="4" y="0" width="4" height="2" fill="#a8a8a8"/><path d="M1.5 5 H10.5 V14.5 H1.5z" fill="#a8a8a8"/><g fill="#3d3d3d"><rect x="3.3" y="6" width="1.2" height="7.5"/><rect x="5.4" y="6" width="1.2" height="7.5"/><rect x="7.5" y="6" width="1.2" height="7.5"/></g></svg>
<div class="a" style="left:1232px;top:691px;width:263px;height:1px;background:#4a4a4a"></div><div class="tabbar" style="top:692px;height:23px"></div>
<div class="a" style="left:1251px;top:695px;width:55px;height:20px;background:#3f3f3f"></div>
<div class="tab on" style="left:1254px;top:698px">Transform</div>
<div class="tab" style="left:1310px;top:698px">History</div>
<div class="tab" style="left:1353px;top:698px">Navigator</div>

<!-- transform panel -->
<div class="a" style="left:1232px;top:714px;width:263px;height:101px;background:#3f3f3f"></div>

<svg class="a" style="left:1244px;top:730px" width="46" height="46" viewBox="1244 730 46 46"><rect x="1252.5" y="738.4" width="32.3" height="32.3" fill="#666" stroke="#3a3a3a" stroke-width="1"/><g fill="#a4a4a4"><rect x="1249.4" y="751.6" width="5.6" height="5.6"/><rect x="1249.4" y="767.9" width="5.6" height="5.6"/><rect x="1265.6" y="735.3" width="5.6" height="5.6"/><rect x="1265.6" y="751.6" width="5.6" height="5.6"/><rect x="1265.6" y="767.9" width="5.6" height="5.6"/><rect x="1282.0" y="735.3" width="5.6" height="5.6"/><rect x="1282.0" y="751.6" width="5.6" height="5.6"/><rect x="1282.0" y="767.9" width="5.6" height="5.6"/></g><rect x="1247.2" y="733" width="9.9" height="9.9" fill="#fff"/></svg>
<div class="txt" style="left:1306px;top:729px;color:#c8c8c8">X:</div>
<div class="txt" style="left:1306px;top:751px;color:#c8c8c8">Y:</div>
<div class="txt" style="left:1306px;top:783px;color:#c8c8c8">R:</div>
<div class="txt" style="left:1388px;top:729px;color:#c8c8c8">W:</div>
<div class="txt" style="left:1390px;top:751px;color:#c8c8c8">H:</div>
<div class="txt" style="left:1390px;top:783px;color:#c8c8c8">S:</div>
<div class="fld" style="left:1319px;top:725px;width:60px">0.773 in</div>
<div class="fld" style="left:1319px;top:747px;width:60px">6.002 in</div>
<div class="fld" style="left:1319px;top:779px;width:60px">0 °</div>
<div class="fld" style="left:1403px;top:725px;width:60px">8.235 in</div>
<div class="fld" style="left:1403px;top:747px;width:60px">0.505 in</div>
<div class="fld" style="left:1403px;top:779px;width:60px">0 °</div>
<svg class="a" style="left:1368px;top:786px" width="8" height="7"><path d="M0 0.5h7l-3.5 5.5z" fill="#ddd"/></svg>
<svg class="a" style="left:1452px;top:786px" width="8" height="7"><path d="M0 0.5h7l-3.5 5.5z" fill="#ddd"/></svg>
<svg class="a" style="left:1472px;top:738px" width="8" height="16"><g fill="none" stroke="#999" stroke-width="1"><ellipse cx="4" cy="4" rx="2.5" ry="3.2"/><ellipse cx="4" cy="12" rx="2.5" ry="3.2"/><line x1="4" y1="6.5" x2="4" y2="9.5"/></g></svg>

<div class="a" style="left:1239px;top:130px;width:1px;height:9px;background:#5a5a5a"></div><div class="a" style="left:1242px;top:130px;width:1px;height:9px;background:#5a5a5a"></div>
<div class="a" style="left:1332px;top:129px;width:1px;height:11px;background:#555"></div>
<div class="a" style="left:1379px;top:129px;width:1px;height:11px;background:#555"></div>
<div class="a" style="left:1428px;top:129px;width:1px;height:11px;background:#555"></div>
<div class="a" style="left:1239px;top:364px;width:1px;height:9px;background:#5a5a5a"></div><div class="a" style="left:1242px;top:364px;width:1px;height:9px;background:#5a5a5a"></div>
<div class="a" style="left:1331px;top:362px;width:1px;height:12px;background:#555"></div>
<div class="a" style="left:1370px;top:362px;width:1px;height:12px;background:#555"></div>
<div class="a" style="left:1430px;top:362px;width:1px;height:12px;background:#555"></div>
<svg class="a" style="left:1480px;top:363px" width="16" height="12"><g fill="#e8e8e8"><rect x="0" y="1" width="8.5" height="1"/><rect x="0" y="3" width="8.5" height="1"/><rect x="0" y="5" width="8.5" height="1"/><rect x="0" y="7" width="8.5" height="1"/></g><path d="M9.5 7.5 h4.5 l-2.25 3z" fill="#e8e8e8"/></svg>
<div class="a" style="left:1239px;top:700px;width:1px;height:9px;background:#5a5a5a"></div><div class="a" style="left:1242px;top:700px;width:1px;height:9px;background:#5a5a5a"></div>
<div class="a" style="left:1350px;top:698px;width:1px;height:12px;background:#555"></div>
</body></html>
